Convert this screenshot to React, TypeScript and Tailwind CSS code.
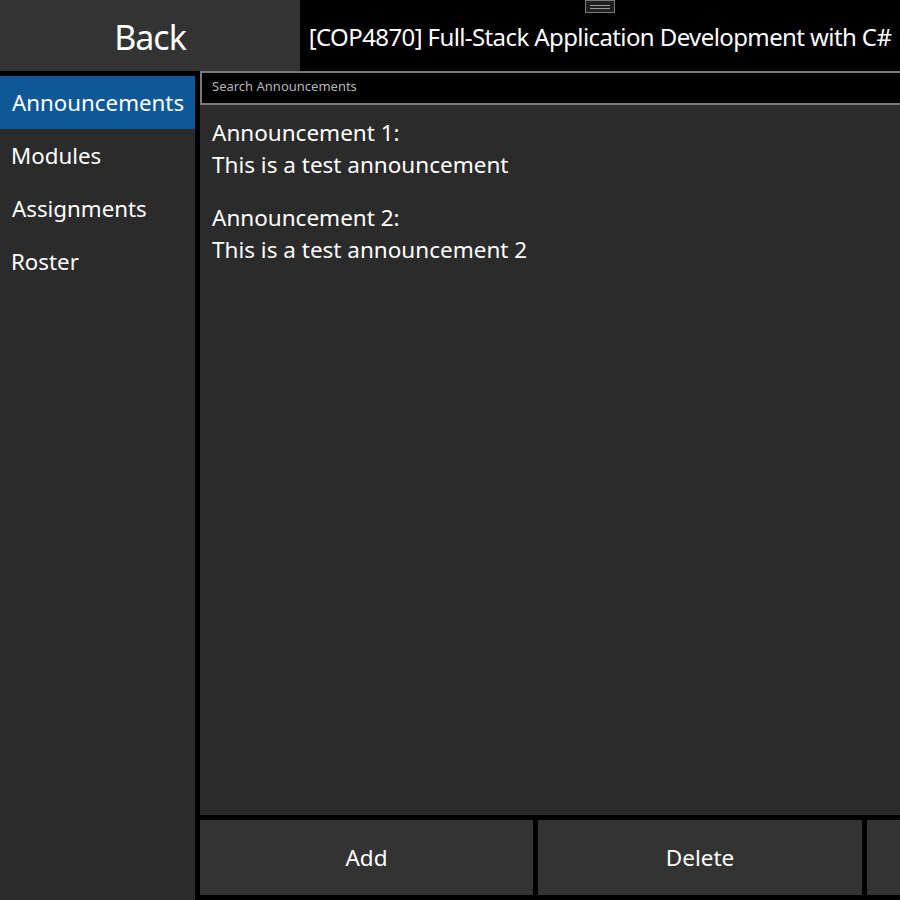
import React from "react";

const font = { fontFamily: '"Noto Sans", "Open Sans", sans-serif' };

export default function App() {
  const nav = ["Announcements", "Modules", "Assignments", "Roster"];
  return (
    <div className="w-[900px] h-[900px] bg-black flex flex-col overflow-hidden text-white relative" style={font}>
      {/* handle */}
      <div className="absolute left-[585px] top-0 w-[30px] h-[13px] bg-[#1f1f1f] border border-[#7a7a7a] flex flex-col items-center justify-center gap-[2px]">
        <div className="w-[20px] h-px bg-[#9a9a9a]" />
        <div className="w-[20px] h-px bg-[#9a9a9a]" />
      </div>
      {/* top bar */}
      <div className="flex h-[71px] shrink-0">
        <div className="w-[300px] bg-[#333333] flex items-center justify-center text-[34px] tracking-[-1px] pt-[4px]">Back</div>
        <div className="flex-1 bg-black flex items-center justify-center text-[24px] tracking-[-0.6px] pt-[2px]">
          [COP4870] Full-Stack Application Development with C#
        </div>
      </div>
      <div className="flex flex-1 min-h-0">
        {/* sidebar */}
        <div className="w-[195px] bg-[#2b2b2b] flex flex-col shrink-0 border-t-[5px] border-black">
          {nav.map((n, i) => (
            <div
              key={n}
              className={
                "h-[53px] flex items-center text-[22.3px] " +
                (i === 0 ? "bg-[#0f5897] pl-[12px]" : i === 2 ? "pl-[12px]" : "pl-[11px]")
              }
            >
              {n}
            </div>
          ))}
        </div>
        <div className="w-[5px] bg-black shrink-0" />
        {/* main */}
        <div className="flex-1 flex flex-col min-w-0">
          <div className="h-[34px] bg-black border-2 border-[#7a7a7a] border-r-0 flex items-center pl-[10px] pb-[3px] text-[13px] text-[#b4b4b4] shrink-0">
            Search Announcements
          </div>
          <div className="flex-1 bg-[#2b2b2b] pl-[12px] pt-[12px] text-[22.5px] flex flex-col gap-[21px]">
            <div className="leading-[32px]">
              <div>Announcement 1:</div>
              <div>This is a test announcement</div>
            </div>
            <div className="leading-[32px]">
              <div>Announcement 2:</div>
              <div>This is a test announcement 2</div>
            </div>
          </div>
          <div className="h-[85px] shrink-0 flex gap-[5px] pt-[5px] pb-[5px] bg-black">
            <div className="w-[333px] shrink-0 bg-[#333333] flex items-center justify-center text-[22.5px]">Add</div>
            <div className="w-[324px] shrink-0 bg-[#333333] flex items-center justify-center text-[22.5px]">Delete</div>
            <div className="flex-1 bg-[#333333]" />
          </div>
        </div>
      </div>
    </div>
  );
}
